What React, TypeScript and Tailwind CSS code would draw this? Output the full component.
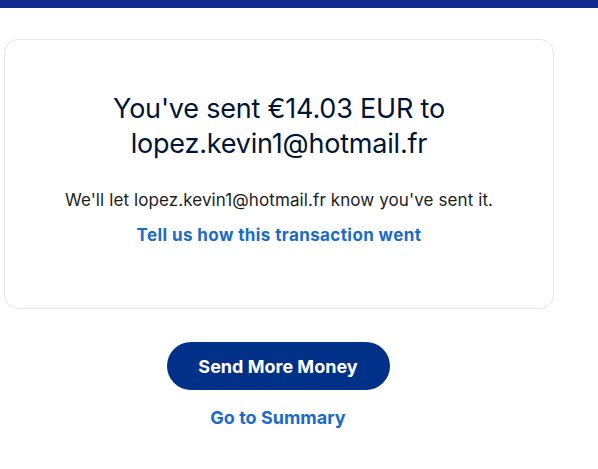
import React from "react";

export default function App() {
  return (
    <div className="min-h-[469px] w-[598px] bg-white" style={{ fontFamily: "Inter, 'Noto Sans', sans-serif" }}>
      <div className="h-2 bg-[#142c8e]" />
      <div className="pl-1 pt-[31px] w-[554px]">
        <div className="rounded-[14px] border border-[#e6e6e6] h-[270px] flex flex-col items-center pt-[51px]">
          <h1 className="text-[27px] leading-[35px] text-[#001435] text-center font-normal tracking-[-0.2px]">
            You've sent €14.03 EUR to
            <br />
            lopez.kevin1@hotmail.fr
          </h1>
          <p className="mt-[27px] text-[17px] leading-6 text-[#1c1c1c] tracking-[0.1px]">
            We'll let lopez.kevin1@hotmail.fr know you've sent it.
          </p>
          <a className="mt-[11px] text-[17px] leading-6 font-bold text-[#1a6bc7] tracking-[0.4px]">
            Tell us how this transaction went
          </a>
        </div>
      </div>
      <div className="w-[556px] flex flex-col items-center mt-[33px]">
        <button className="w-[223px] h-[48px] rounded-full bg-[#003087] text-white font-bold text-[18px]">
          Send More Money
        </button>
        <a className="mt-[16px] text-[18px] leading-6 font-bold text-[#1a6bc7]">
          Go to Summary
        </a>
      </div>
    </div>
  );
}
